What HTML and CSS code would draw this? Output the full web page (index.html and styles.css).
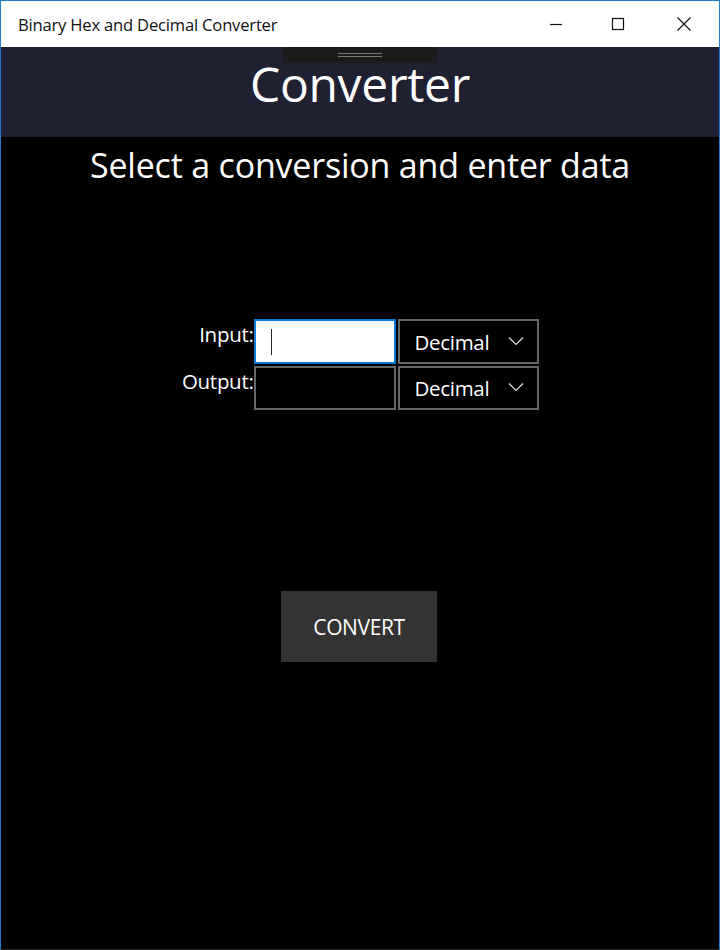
FILE: index.html
```html
<!DOCTYPE html>
<html lang="en">
<head>
<meta charset="utf-8">
<title>Binary Hex and Decimal Converter</title>
<link rel="stylesheet" href="styles.css">
</head>
<body>
<div class="window">
  <div class="titlebar">
    <span class="title">Binary Hex and Decimal Converter</span>
    <div class="controls">
      <span class="ctl">
        <svg width="16" height="16" viewBox="0 0 16 16"><path d="M2 8.5h12" stroke="#111" stroke-width="1.2" fill="none"/></svg>
      </span>
      <span class="ctl">
        <svg width="16" height="16" viewBox="0 0 16 16"><rect x="2.5" y="2.5" width="11" height="11" stroke="#111" stroke-width="1.2" fill="none"/></svg>
      </span>
      <span class="ctl">
        <svg width="16" height="16" viewBox="0 0 16 16"><path d="M1.5 1.5l13 13M14.5 1.5l-13 13" stroke="#111" stroke-width="1.2" fill="none"/></svg>
      </span>
    </div>
  </div>
  <div class="header">
    <div class="handle"><span class="grip"></span></div>
    <h1 class="app-title">Converter</h1>
  </div>
  <main class="content">
    <h2 class="subtitle">Select a conversion and enter data</h2>
    <div class="form">
      <label class="label">Input:</label>
      <div class="textbox focused"><span class="caret"></span></div>
      <div class="combo"><span class="combo-text">Decimal</span>
        <svg class="chev" width="16" height="10" viewBox="0 0 16 10"><path d="M1 1.5l7 7 7-7" stroke="#ddd" stroke-width="1.2" fill="none"/></svg>
      </div>
      <label class="label">Output:</label>
      <div class="textbox"></div>
      <div class="combo"><span class="combo-text">Decimal</span>
        <svg class="chev" width="16" height="10" viewBox="0 0 16 10"><path d="M1 1.5l7 7 7-7" stroke="#ddd" stroke-width="1.2" fill="none"/></svg>
      </div>
    </div>
    <button class="convert">CONVERT</button>
  </main>
</div>
</body>
</html>
```

FILE: styles.css
```css
html, body {
  margin: 0;
  padding: 0;
  background: #000;
}
body {
  font-family: "Open Sans", "Noto Sans", sans-serif;
}
.window {
  width: 720px;
  height: 950px;
  box-sizing: border-box;
  border: 1px solid #1a7ad0;
  border-bottom-color: #2a2a2a;
  display: flex;
  flex-direction: column;
  background: #000;
  overflow: hidden;
}
.titlebar {
  height: 46px;
  background: #fff;
  display: flex;
  align-items: center;
  justify-content: space-between;
  flex-shrink: 0;
}
.title {
  font-size: 16.6px;
  color: #111;
  padding-left: 17px;
  letter-spacing: -0.2px;
}
.controls {
  display: flex;
  height: 100%;
}
.ctl {
  width: 62px;
  display: flex;
  align-items: center;
  justify-content: center;
}
.controls .ctl:last-child { width: 70px; }
.header {
  height: 90px;
  background: #1f2031;
  display: flex;
  flex-direction: column;
  align-items: center;
  flex-shrink: 0;
}
.handle {
  width: 154px;
  height: 16px;
  background: #1b1b1c;
  display: flex;
  justify-content: center;
  align-items: center;
}
.grip {
  width: 44px;
  height: 2px;
  border-top: 1px solid #777;
  border-bottom: 1px solid #777;
}
.app-title {
  margin: -7px 0 0 0;
  font-weight: 400;
  font-size: 48px;
  color: #fff;
  line-height: 56px;
  letter-spacing: -0.3px;
}
.content {
  display: flex;
  flex-direction: column;
  align-items: center;
  flex: 1;
}
.subtitle {
  margin: 6px 0 0 0;
  font-weight: 400;
  font-size: 34px;
  line-height: 44px;
  color: #fff;
  letter-spacing: -0.2px;
}
.form {
  margin-top: 132px;
  display: grid;
  grid-template-columns: 72px 142px 141px;
  grid-template-rows: 45px 44px;
  column-gap: 2px;
  row-gap: 2px;
  transform: translateX(-1px);
}
.label {
  color: #fff;
  font-size: 20.5px;
  text-align: right;
  line-height: 30px;
  margin-right: -2px;
  letter-spacing: -0.3px;
}
.textbox {
  box-sizing: border-box;
  border: 2px solid #666;
  background: #000;
  position: relative;
}
.textbox.focused {
  border-color: #0a78d6;
  background: #fff;
}
.caret {
  position: absolute;
  left: 15px;
  top: 8px;
  width: 1px;
  height: 26px;
  background: #222;
}
.combo {
  box-sizing: border-box;
  border: 2px solid #666;
  background: #000;
  display: flex;
  align-items: center;
  justify-content: space-between;
  padding: 0 13px 0 15px;
}
.combo-text {
  color: #fff;
  font-size: 20.5px;
  letter-spacing: -0.3px;
}
.chev { margin-top: -2px; }
.convert {
  margin-top: 181px;
  width: 156px;
  height: 71px;
  background: #333;
  border: none;
  color: #fff;
  font-family: "Open Sans", "Noto Sans", sans-serif;
  font-size: 21px;
  letter-spacing: -0.4px;
  padding: 0;
  transform: translateX(-1px);
}
```
